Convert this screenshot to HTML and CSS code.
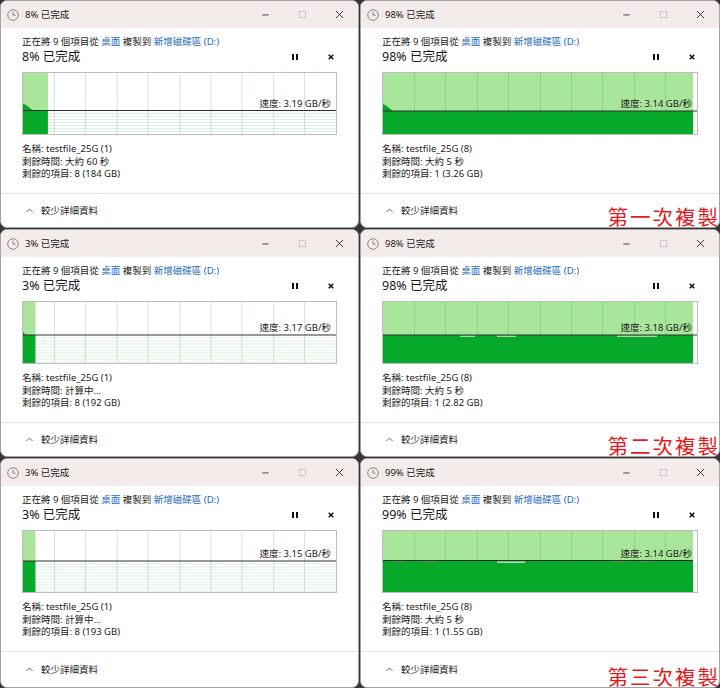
FILE: index.html
```html
<!DOCTYPE html>
<html lang="zh-Hant">
<head>
<meta charset="utf-8">
<title>複製進度</title>
<link rel="stylesheet" href="styles.css">
</head>
<body>
<div class="grid">

  <!-- Row 1 left -->
  <div class="cell">
    <div class="win">
      <div class="titlebar">
        <svg class="clock" viewBox="0 0 12 12"><circle cx="6" cy="6" r="5.3"/><path d="M6 2.8V6.2H8.6"/></svg>
        <span class="ttl">8% 已完成</span>
        <div class="caps">
          <span class="cap"><svg viewBox="0 0 10 10"><path class="mn" d="M1.5 5.5H8.5"/></svg></span>
          <span class="cap"><svg viewBox="0 0 10 10"><rect class="mx" x="1.5" y="1.5" width="7" height="7"/></svg></span>
          <span class="cap"><svg viewBox="0 0 10 10"><path class="cl" d="M1 1L9 9M9 1L1 9"/></svg></span>
        </div>
      </div>
      <div class="body">
        <div class="line1">正在將 9 個項目從 <span class="lnk">桌面</span> 複製到 <span class="lnk">新增磁碟區 (D:)</span></div>
        <div class="head"><span class="pct">8% 已完成</span>
          <div class="ctl"><span class="pause"><i></i><i></i></span><svg class="stop" viewBox="0 0 6 6"><path d="M0.7 0.7L5.3 5.3M5.3 0.7L0.7 5.3"/></svg></div>
        </div>
        <div class="chart" style="--l:37.5px">
          <svg viewBox="0 0 314 61" preserveAspectRatio="none">
            <path class="hl" d="M0 40.5H314M0 43.5H314M0 46.5H314M0 49.5H314M0 52.5H314M0 55.5H314M0 58.5H314"/>
            <rect class="lt" x="0" y="0" width="25" height="37.5"/>
            <rect class="dk" x="0" y="37.5" width="25" height="23.5"/>
            <path class="vl" d="M31.5 0V61M62.5 0V61M94.5 0V61M125.5 0V61M157.5 0V61M188.5 0V61M219.5 0V61M251.5 0V61M282.5 0V61"/>
            <polygon class="dk" points="0,30.5 3,32 10,37.5 0,37.5"/>
            <path class="sl" d="M0 37.5H314"/>
          </svg>
          <span class="speed">速度: 3.19 GB/秒</span>
        </div>
        <div class="info">
          <div>名稱: testfile_25G (1)</div>
          <div>剩餘時間: 大約 60 秒</div>
          <div>剩餘的項目: 8 (184 GB)</div>
        </div>
      </div>
      <div class="footer"><svg class="chev" viewBox="0 0 8 5"><path d="M0.5 4.5L4 1L7.5 4.5"/></svg><span>較少詳細資料</span></div>
    </div>
  </div>

  <!-- Row 1 right -->
  <div class="cell">
    <div class="win">
      <div class="titlebar">
        <svg class="clock" viewBox="0 0 12 12"><circle cx="6" cy="6" r="5.3"/><path d="M6 2.8V6.2H8.6"/></svg>
        <span class="ttl">98% 已完成</span>
        <div class="caps">
          <span class="cap"><svg viewBox="0 0 10 10"><path class="mn" d="M1.5 5.5H8.5"/></svg></span>
          <span class="cap"><svg viewBox="0 0 10 10"><rect class="mx" x="1.5" y="1.5" width="7" height="7"/></svg></span>
          <span class="cap"><svg viewBox="0 0 10 10"><path class="cl" d="M1 1L9 9M9 1L1 9"/></svg></span>
        </div>
      </div>
      <div class="body">
        <div class="line1">正在將 9 個項目從 <span class="lnk">桌面</span> 複製到 <span class="lnk">新增磁碟區 (D:)</span></div>
        <div class="head"><span class="pct">98% 已完成</span>
          <div class="ctl"><span class="pause"><i></i><i></i></span><svg class="stop" viewBox="0 0 6 6"><path d="M0.7 0.7L5.3 5.3M5.3 0.7L0.7 5.3"/></svg></div>
        </div>
        <div class="chart" style="--l:38px">
          <svg viewBox="0 0 314 61" preserveAspectRatio="none">
            <rect class="lt" x="0" y="0" width="310" height="38"/>
            <rect class="dk" x="0" y="38" width="310" height="23"/>
            <path class="vl" d="M31.5 0V61M62.5 0V61M94.5 0V61M125.5 0V61M157.5 0V61M188.5 0V61M219.5 0V61M251.5 0V61M282.5 0V61"/>
            <polygon class="dk" points="0,31 3,32.5 10,38 0,38"/>
            <path class="sl" d="M0 38H314"/>
          </svg>
          <span class="speed">速度: 3.14 GB/秒</span>
        </div>
        <div class="info">
          <div>名稱: testfile_25G (8)</div>
          <div>剩餘時間: 大約 5 秒</div>
          <div>剩餘的項目: 1 (3.26 GB)</div>
        </div>
      </div>
      <div class="footer"><svg class="chev" viewBox="0 0 8 5"><path d="M0.5 4.5L4 1L7.5 4.5"/></svg><span>較少詳細資料</span></div>
    </div>
    <div class="stamp">第一次複製</div>
  </div>

  <!-- Row 2 left -->
  <div class="cell">
    <div class="win">
      <div class="titlebar">
        <svg class="clock" viewBox="0 0 12 12"><circle cx="6" cy="6" r="5.3"/><path d="M6 2.8V6.2H8.6"/></svg>
        <span class="ttl">3% 已完成</span>
        <div class="caps">
          <span class="cap"><svg viewBox="0 0 10 10"><path class="mn" d="M1.5 5.5H8.5"/></svg></span>
          <span class="cap"><svg viewBox="0 0 10 10"><rect class="mx" x="1.5" y="1.5" width="7" height="7"/></svg></span>
          <span class="cap"><svg viewBox="0 0 10 10"><path class="cl" d="M1 1L9 9M9 1L1 9"/></svg></span>
        </div>
      </div>
      <div class="body">
        <div class="line1">正在將 9 個項目從 <span class="lnk">桌面</span> 複製到 <span class="lnk">新增磁碟區 (D:)</span></div>
        <div class="head"><span class="pct">3% 已完成</span>
          <div class="ctl"><span class="pause"><i></i><i></i></span><svg class="stop" viewBox="0 0 6 6"><path d="M0.7 0.7L5.3 5.3M5.3 0.7L0.7 5.3"/></svg></div>
        </div>
        <div class="chart" style="--l:33px">
          <svg viewBox="0 0 314 61" preserveAspectRatio="none">
            <path class="hl" d="M0 36H314M0 39H314M0 42H314M0 45H314M0 48H314M0 51H314M0 54H314M0 57H314M0 60H314"/>
            <rect class="lt" x="0" y="0" width="12.5" height="33"/>
            <rect class="dk" x="0" y="33" width="12.5" height="28"/>
            <path class="vl" d="M31.5 0V61M62.5 0V61M94.5 0V61M125.5 0V61M157.5 0V61M188.5 0V61M219.5 0V61M251.5 0V61M282.5 0V61"/>
            <polygon class="dk" points="0,30 3,33 0,33"/>
            <path class="sl" d="M0 33H314"/>
          </svg>
          <span class="speed">速度: 3.17 GB/秒</span>
        </div>
        <div class="info">
          <div>名稱: testfile_25G (1)</div>
          <div>剩餘時間: 計算中...</div>
          <div>剩餘的項目: 8 (192 GB)</div>
        </div>
      </div>
      <div class="footer"><svg class="chev" viewBox="0 0 8 5"><path d="M0.5 4.5L4 1L7.5 4.5"/></svg><span>較少詳細資料</span></div>
    </div>
  </div>

  <!-- Row 2 right -->
  <div class="cell">
    <div class="win">
      <div class="titlebar">
        <svg class="clock" viewBox="0 0 12 12"><circle cx="6" cy="6" r="5.3"/><path d="M6 2.8V6.2H8.6"/></svg>
        <span class="ttl">98% 已完成</span>
        <div class="caps">
          <span class="cap"><svg viewBox="0 0 10 10"><path class="mn" d="M1.5 5.5H8.5"/></svg></span>
          <span class="cap"><svg viewBox="0 0 10 10"><rect class="mx" x="1.5" y="1.5" width="7" height="7"/></svg></span>
          <span class="cap"><svg viewBox="0 0 10 10"><path class="cl" d="M1 1L9 9M9 1L1 9"/></svg></span>
        </div>
      </div>
      <div class="body">
        <div class="line1">正在將 9 個項目從 <span class="lnk">桌面</span> 複製到 <span class="lnk">新增磁碟區 (D:)</span></div>
        <div class="head"><span class="pct">98% 已完成</span>
          <div class="ctl"><span class="pause"><i></i><i></i></span><svg class="stop" viewBox="0 0 6 6"><path d="M0.7 0.7L5.3 5.3M5.3 0.7L0.7 5.3"/></svg></div>
        </div>
        <div class="chart" style="--l:33px">
          <svg viewBox="0 0 314 61" preserveAspectRatio="none">
            <rect class="lt" x="0" y="0" width="310" height="33"/>
            <rect class="dk" x="0" y="33" width="310" height="28"/>
            <path class="vl" d="M31.5 0V61M62.5 0V61M94.5 0V61M125.5 0V61M157.5 0V61M188.5 0V61M219.5 0V61M251.5 0V61M282.5 0V61"/>
            <rect class="gap" x="77" y="33.5" width="15" height="1.3"/>
            <rect class="gap" x="114" y="33.5" width="19" height="1.3"/>
            <rect class="gap" x="234" y="33.5" width="40" height="1.3"/>
            <path class="sl" d="M0 33H314"/>
          </svg>
          <span class="speed">速度: 3.18 GB/秒</span>
        </div>
        <div class="info">
          <div>名稱: testfile_25G (8)</div>
          <div>剩餘時間: 大約 5 秒</div>
          <div>剩餘的項目: 1 (2.82 GB)</div>
        </div>
      </div>
      <div class="footer"><svg class="chev" viewBox="0 0 8 5"><path d="M0.5 4.5L4 1L7.5 4.5"/></svg><span>較少詳細資料</span></div>
    </div>
    <div class="stamp">第二次複製</div>
  </div>

  <!-- Row 3 left -->
  <div class="cell">
    <div class="win">
      <div class="titlebar">
        <svg class="clock" viewBox="0 0 12 12"><circle cx="6" cy="6" r="5.3"/><path d="M6 2.8V6.2H8.6"/></svg>
        <span class="ttl">3% 已完成</span>
        <div class="caps">
          <span class="cap"><svg viewBox="0 0 10 10"><path class="mn" d="M1.5 5.5H8.5"/></svg></span>
          <span class="cap"><svg viewBox="0 0 10 10"><rect class="mx" x="1.5" y="1.5" width="7" height="7"/></svg></span>
          <span class="cap"><svg viewBox="0 0 10 10"><path class="cl" d="M1 1L9 9M9 1L1 9"/></svg></span>
        </div>
      </div>
      <div class="body">
        <div class="line1">正在將 9 個項目從 <span class="lnk">桌面</span> 複製到 <span class="lnk">新增磁碟區 (D:)</span></div>
        <div class="head"><span class="pct">3% 已完成</span>
          <div class="ctl"><span class="pause"><i></i><i></i></span><svg class="stop" viewBox="0 0 6 6"><path d="M0.7 0.7L5.3 5.3M5.3 0.7L0.7 5.3"/></svg></div>
        </div>
        <div class="chart" style="--l:30px">
          <svg viewBox="0 0 314 61" preserveAspectRatio="none">
            <path class="hl" d="M0 33H314M0 36H314M0 39H314M0 42H314M0 45H314M0 48H314M0 51H314M0 54H314M0 57H314M0 60H314"/>
            <rect class="lt" x="0" y="0" width="12.5" height="30"/>
            <rect class="dk" x="0" y="30" width="12.5" height="31"/>
            <path class="vl" d="M31.5 0V61M62.5 0V61M94.5 0V61M125.5 0V61M157.5 0V61M188.5 0V61M219.5 0V61M251.5 0V61M282.5 0V61"/>
            <path class="sl" d="M0 30H314"/>
          </svg>
          <span class="speed">速度: 3.15 GB/秒</span>
        </div>
        <div class="info">
          <div>名稱: testfile_25G (1)</div>
          <div>剩餘時間: 計算中...</div>
          <div>剩餘的項目: 8 (193 GB)</div>
        </div>
      </div>
      <div class="footer"><svg class="chev" viewBox="0 0 8 5"><path d="M0.5 4.5L4 1L7.5 4.5"/></svg><span>較少詳細資料</span></div>
    </div>
  </div>

  <!-- Row 3 right -->
  <div class="cell">
    <div class="win">
      <div class="titlebar">
        <svg class="clock" viewBox="0 0 12 12"><circle cx="6" cy="6" r="5.3"/><path d="M6 2.8V6.2H8.6"/></svg>
        <span class="ttl">99% 已完成</span>
        <div class="caps">
          <span class="cap"><svg viewBox="0 0 10 10"><path class="mn" d="M1.5 5.5H8.5"/></svg></span>
          <span class="cap"><svg viewBox="0 0 10 10"><rect class="mx" x="1.5" y="1.5" width="7" height="7"/></svg></span>
          <span class="cap"><svg viewBox="0 0 10 10"><path class="cl" d="M1 1L9 9M9 1L1 9"/></svg></span>
        </div>
      </div>
      <div class="body">
        <div class="line1">正在將 9 個項目從 <span class="lnk">桌面</span> 複製到 <span class="lnk">新增磁碟區 (D:)</span></div>
        <div class="head"><span class="pct">99% 已完成</span>
          <div class="ctl"><span class="pause"><i></i><i></i></span><svg class="stop" viewBox="0 0 6 6"><path d="M0.7 0.7L5.3 5.3M5.3 0.7L0.7 5.3"/></svg></div>
        </div>
        <div class="chart" style="--l:29.5px">
          <svg viewBox="0 0 314 61" preserveAspectRatio="none">
            <rect class="lt" x="0" y="0" width="310" height="29.5"/>
            <rect class="dk" x="0" y="29.5" width="310" height="31.5"/>
            <path class="vl" d="M31.5 0V61M62.5 0V61M94.5 0V61M125.5 0V61M157.5 0V61M188.5 0V61M219.5 0V61M251.5 0V61M282.5 0V61"/>
            <path class="sl" d="M0 29.5H310"/>
            <rect class="gap" x="114" y="30.5" width="28" height="1.3"/>
            <rect class="gap2" x="11" y="30" width="9" height="1"/>
            <rect class="gap2" x="40" y="30" width="12" height="1"/>
            <rect class="gap2" x="230" y="30" width="12" height="1"/>
            <rect class="gap2" x="258" y="30" width="8" height="1"/>
          </svg>
          <span class="speed">速度: 3.14 GB/秒</span>
        </div>
        <div class="info">
          <div>名稱: testfile_25G (8)</div>
          <div>剩餘時間: 大約 5 秒</div>
          <div>剩餘的項目: 1 (1.55 GB)</div>
        </div>
      </div>
      <div class="footer"><svg class="chev" viewBox="0 0 8 5"><path d="M0.5 4.5L4 1L7.5 4.5"/></svg><span>較少詳細資料</span></div>
    </div>
    <div class="stamp">第三次複製</div>
  </div>

</div>
</body>
</html>
```

FILE: styles.css
```css
html, body {
  margin: 0;
  padding: 0;
}
body {
  width: 720px;
  height: 688px;
  overflow: hidden;
  background: #3a3634;
  font-family: "Noto Sans", "Noto Sans CJK TC", sans-serif;
  color: #1b1b1b;
}
.grid {
  display: grid;
  grid-template-columns: 359px 360px;
  grid-template-rows: 228px 228px 230px;
  column-gap: 1px;
  row-gap: 1px;
}
.cell {
  position: relative;
  display: flex;
  min-width: 0;
  min-height: 0;
}
.win {
  flex: 1;
  display: flex;
  flex-direction: column;
  background: #ffffff;
  border: 1px solid #a4a4a4;
  border-radius: 7px;
  overflow: hidden;
  min-height: 0;
}
.titlebar {
  height: 27px;
  flex: none;
  background: #f4ecea;
  display: flex;
  align-items: center;
  padding-left: 6px;
}
.clock {
  width: 12px;
  height: 12px;
  margin-right: 6px;
  fill: none;
  stroke: #7a7a7a;
  stroke-width: 0.9;
}
.ttl {
  font-size: 9.5px;
  line-height: 12px;
  color: #1a1a1a;
  white-space: nowrap;
}
.caps {
  margin-left: auto;
  display: flex;
  height: 100%;
}
.cap {
  width: 37px;
  height: 100%;
  display: flex;
  align-items: center;
  justify-content: center;
}
.cap svg {
  width: 9px;
  height: 9px;
  fill: none;
}
.mn { stroke: #333; stroke-width: 1; }
.mx { stroke: #c4c4c4; stroke-width: 1; }
.cl { stroke: #2a2a2a; stroke-width: 1; }

.body {
  padding: 0 21px;
  flex: none;
}
.line1 {
  margin-top: 7px;
  height: 13px;
  line-height: 13px;
  font-size: 9.5px;
  white-space: nowrap;
}
.lnk {
  color: #1a68bd;
}
.head {
  height: 17px;
  display: flex;
  align-items: center;
}
.pct {
  font-size: 12.5px;
  line-height: 17px;
  white-space: nowrap;
  color: #1a1a1a;
}
.ctl {
  margin-left: auto;
  margin-right: 1px;
  display: flex;
  align-items: center;
  gap: 26px;
}
.pause {
  width: 10px;
  height: 6px;
  display: flex;
  justify-content: center;
  gap: 2px;
}
.pause i {
  display: block;
  width: 2px;
  height: 6px;
  background: #111;
}
.stop {
  width: 6px;
  height: 6px;
  margin: 0 2px;
  fill: none;
  stroke: #111;
  stroke-width: 1.5;
}

.chart {
  position: relative;
  margin-top: 7px;
  height: 63px;
  box-sizing: border-box;
  border: 1px solid #bdbdbd;
}
.chart svg {
  display: block;
  width: 100%;
  height: 61px;
}
.hl { stroke: #d3ecd9; stroke-width: 0.8; fill: none; }
.vl { stroke: rgba(30, 150, 60, 0.22); stroke-width: 1; fill: none; }
.lt { fill: #a9e59b; }
.dk { fill: #07a92a; }
.sl { stroke: #2e2e2e; stroke-width: 1; fill: none; }
.gap { fill: #cde9c8; }
.gap2 { fill: #5a8f5f; }
.speed {
  position: absolute;
  right: 5px;
  top: calc(var(--l) - 13px);
  font-size: 9.5px;
  line-height: 11px;
  white-space: nowrap;
  color: #1b1b1b;
}

.info {
  margin-top: 8px;
  font-size: 9.5px;
  line-height: 12.5px;
  white-space: nowrap;
}
.footer {
  margin-top: 12.5px;
  border-top: 1px solid #e4e4e4;
  flex: 1;
  display: flex;
  align-items: center;
  padding-left: 25px;
  gap: 8px;
  font-size: 9.5px;
  line-height: 12px;
  color: #1b1b1b;
}
.chev {
  width: 7px;
  height: 4.5px;
  fill: none;
  stroke: #555;
  stroke-width: 1;
}

.stamp {
  position: absolute;
  right: 0;
  bottom: 2px;
  font-family: "Noto Sans CJK TC", sans-serif;
  font-size: 20.5px;
  line-height: 20px;
  letter-spacing: 2px;
  color: #e5181c;
  white-space: nowrap;
}
```
